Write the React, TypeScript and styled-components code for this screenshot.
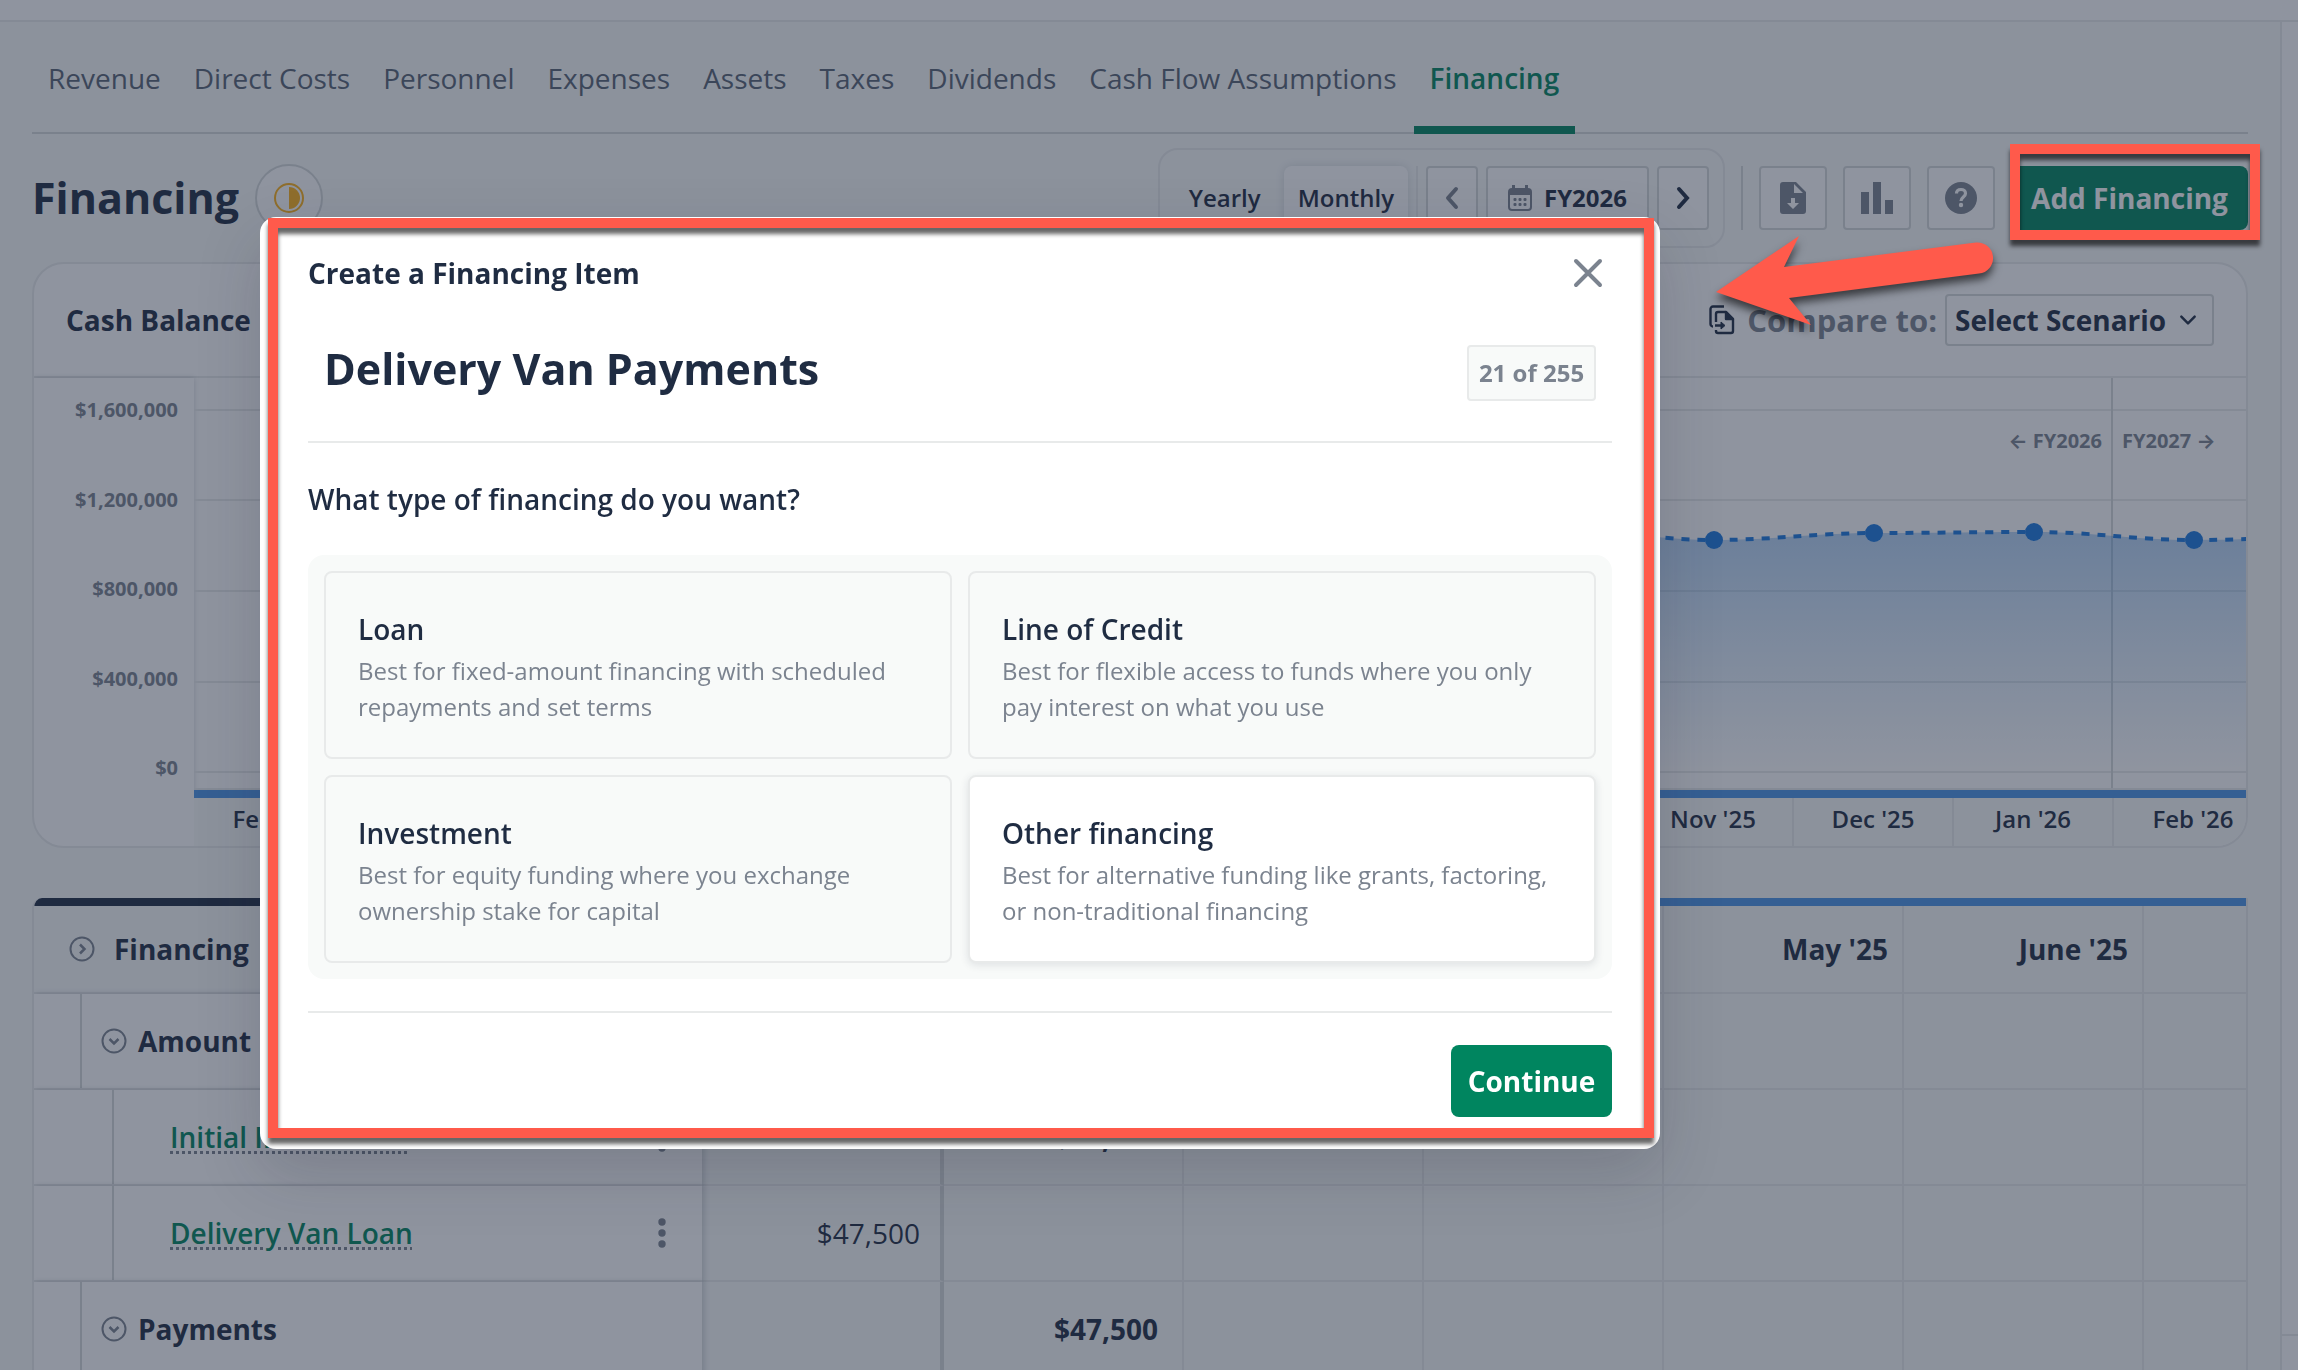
import React from "react";
import styled, { createGlobalStyle, css } from "styled-components";

const color = {
  ink: "#1f2c42",
  slate: "#576373",
  gray: "#7b838f",
  line: "#e8eaea",
  lineDark: "#d5d9d9",
  surface: "#f8faf9",
  green: "#00855f",
  blue: "#4b95e7",
  plot: "#1b79df",
  alert: "#ff5a4b",
};

const GlobalStyle = createGlobalStyle`
  *, *::before, *::after { box-sizing: border-box; }
  body {
    margin: 0;
    background: ${color.surface};
    color: ${color.ink};
    font-family: "Open Sans", "Noto Sans", sans-serif;
    font-size: 28px;
    line-height: 40px;
  }
  button, input, select { font: inherit; color: inherit; margin: 0; }
  h1, h2, p, ul { margin: 0; padding: 0; }
`;

/* ---------- page shell ---------- */

const Shell = styled.div`
  display: flex;
  flex-direction: column;
  height: 100vh;
  overflow: hidden;
`;

const TopBar = styled.div`
  flex: none;
  height: 22px;
  background: #fff;
  border-bottom: 2px solid ${color.line};
`;

const Body = styled.div`
  display: flex;
  flex: 1;
  min-height: 0;
`;

const Main = styled.main`
  flex: 1;
  min-width: 0;
  padding: 0 32px;
`;

const SidePanel = styled.aside`
  flex: none;
  display: flex;
  flex-direction: column;
  justify-content: flex-end;
  width: 18px;
  background: #fff;
  border-left: 2px solid ${color.line};
`;

const SideFooter = styled.div`
  height: 36px;
  border-top: 2px solid ${color.line};
`;

const Tabs = styled.nav`
  display: flex;
  gap: 1px;
  height: 112px;
  border-bottom: 2px solid ${color.lineDark};
`;

const Tab = styled.a<{ $active?: boolean }>`
  display: flex;
  align-items: center;
  height: 112px;
  padding: 0 16px;
  color: ${color.slate};
  text-decoration: none;
  white-space: nowrap;
  ${(p) =>
    p.$active &&
    css`
      color: ${color.green};
      font-weight: 600;
      box-shadow: inset 0 -8px ${color.green};
    `}
`;

/* ---------- toolbar ---------- */

const Toolbar = styled.div`
  display: flex;
  align-items: center;
  gap: 16px;
  padding: 14px 0;
`;

const PageTitle = styled.h1`
  font-size: 43px;
  line-height: 56px;
  font-weight: 700;
`;

const StatusBadge = styled.div`
  display: grid;
  place-items: center;
  width: 68px;
  height: 68px;
  background: #fff;
  border: 2px solid ${color.lineDark};
  border-radius: 50%;
`;

const Spacer = styled.div`
  flex: 1;
`;

const PeriodGroup = styled.div`
  display: flex;
  gap: 8px;
  height: 100px;
  padding: 16px 14px;
  border: 2px solid ${color.line};
  border-radius: 20px;
  font-size: 24px;
  font-weight: 600;
`;

const PeriodButton = styled.button<{ $selected?: boolean }>`
  min-width: 102px;
  padding: 0 14px;
  border: 0;
  border-radius: 8px;
  background: ${(p) => (p.$selected ? "#fff" : "transparent")};
  box-shadow: ${(p) => (p.$selected ? "0 0 8px rgba(31, 44, 66, 0.14)" : "none")};
`;

const Rule = styled.span<{ $dark?: boolean }>`
  width: 2px;
  height: 64px;
  background: ${(p) => (p.$dark ? color.lineDark : color.line)};
`;

const BoxButton = styled.button<{ $width: number }>`
  display: flex;
  align-items: center;
  justify-content: center;
  gap: 12px;
  width: ${(p) => p.$width}px;
  height: 64px;
  padding: 0;
  background: #fff;
  border: 2px solid ${color.lineDark};
  border-radius: 4px;
  color: ${color.gray};
  font-weight: 600;
`;

const Strong = styled.span`
  color: ${color.ink};
  font-weight: 700;
`;

const PrimaryButton = styled.button<{ $width: number; $height: number }>`
  width: ${(p) => p.$width}px;
  height: ${(p) => p.$height}px;
  padding: 0;
  border: 0;
  border-radius: 8px;
  background: ${color.green};
  color: #fff;
  font-weight: 700;
`;

/* ---------- chart card ---------- */

const Card = styled.section`
  border: 2px solid ${color.line};
  border-radius: 32px;
  background: #fff;
  overflow: hidden;
`;

const CardHeader = styled.header`
  display: flex;
  align-items: center;
  height: 114px;
  padding: 0 32px;
  border-bottom: 2px solid ${color.line};
`;

const CardTitle = styled.h2`
  font-size: 28px;
  line-height: 40px;
  font-weight: 700;
`;

const CompareLabel = styled.label`
  display: flex;
  align-items: center;
  gap: 12px;
  margin: 0 8px 0 auto;
  font-weight: 700;
  font-size: 31px;
  color: ${color.gray};
`;

const SelectWrap = styled.div`
  display: grid;
  align-items: center;
  width: 269px;
  height: 52px;
  border: 2px solid ${color.lineDark};
  border-radius: 4px;

  & > * {
    grid-area: 1 / 1;
  }
  & > svg {
    justify-self: end;
    margin-right: 14px;
    pointer-events: none;
  }
`;

const ScenarioSelect = styled.select`
  appearance: none;
  width: 100%;
  height: 48px;
  padding: 0 0 0 8px;
  border: 0;
  background: transparent;
  font-weight: 700;
`;

const ChartBody = styled.div`
  display: flex;
  height: 468px;
`;

const AxisColumn = styled.div`
  flex: none;
  display: flex;
  flex-direction: column;
  justify-content: space-between;
  width: 160px;
  padding: 16px 16px 62px 0;
  font-size: 20px;
  line-height: 32px;
  font-weight: 700;
  text-align: right;
  color: ${color.gray};
  box-shadow: 0 0 6px rgba(31, 44, 66, 0.2);
`;

const Plot = styled.div`
  flex: 1;
  min-width: 0;
  overflow: hidden;

  & > svg {
    display: block;
  }
`;

const MonthAxis = styled.div`
  display: grid;
  grid-template-columns: repeat(13, 160px);
  border-top: 8px solid ${color.blue};
  background: ${color.surface};
`;

const MonthCell = styled.div`
  height: 48px;
  border-right: 2px solid ${color.line};
  font-size: 24px;
  line-height: 42px;
  font-weight: 600;
  text-align: center;
`;

/* ---------- forecast table ---------- */

const TableFrame = styled.section`
  margin-top: 50px;
  border: solid ${color.line};
  border-width: 0 2px;
  border-radius: 10px 0 0 0;
  overflow: hidden;
`;

const TableBar = styled.div`
  height: 8px;
  background: linear-gradient(to right, ${color.ink} 668px, ${color.blue} 668px);
`;

const Table = styled.table`
  table-layout: fixed;
  width: 2350px;
  border-collapse: separate;
  border-spacing: 0;
`;

const HeadCell = styled.th<{ $frozen?: boolean; $wide?: boolean }>`
  height: 88px;
  padding: ${(p) => (p.$frozen ? 0 : "0 14px 0 0")};
  border-bottom: 2px solid ${color.line};
  border-right: ${(p) => (p.$frozen ? 0 : p.$wide ? 4 : 2)}px solid ${(p) => (p.$wide ? color.lineDark : color.line)};
  background: ${color.surface};
  font-weight: 700;
  text-align: right;
`;

const NameCell = styled.th`
  position: relative;
  height: 96px;
  padding: 0;
  border-bottom: 2px solid ${color.line};
  background: #fff;
  box-shadow: 2px 0 6px rgba(31, 44, 66, 0.2);
  text-align: left;
`;

const ValueCell = styled.td<{ $wide?: boolean; $bold?: boolean }>`
  padding: 0 ${(p) => (p.$wide ? 20 : 24)}px 0 0;
  border-bottom: 2px solid ${color.line};
  border-right: ${(p) => (p.$wide ? 4 : 2)}px solid ${(p) => (p.$wide ? color.lineDark : color.line)};
  font-weight: ${(p) => (p.$bold ? 700 : 400)};
  text-align: right;
`;

const RowHead = styled.div`
  display: flex;
  align-items: center;
  height: 94px;
  padding-right: 36px;
  font-weight: 700;
`;

const HeadLabel = styled(RowHead)`
  height: 86px;
  padding-left: 35px;
`;

const Guide = styled.span<{ $depth: number }>`
  align-self: stretch;
  width: ${(p) => p.$depth * 32 + 16}px;
  border-right: 2px solid ${color.lineDark};
`;

const IconButton = styled.button`
  display: flex;
  padding: 0;
  border: 0;
  background: transparent;
  color: ${color.gray};
`;

const ToggleButton = styled(IconButton)`
  margin: 0 11px 0 19px;
`;

const HeadToggle = styled(IconButton)`
  margin-right: 19px;
`;

const ItemLink = styled.a`
  margin-left: 56px;
  color: ${color.green};
  font-weight: 600;
  text-decoration: underline dotted ${color.gray} 3px;
  text-underline-offset: 3px;
`;

/* ---------- dialog ---------- */

const Overlay = styled.div`
  position: fixed;
  inset: 0;
  padding: 217px 0 0 260px;
  background: rgba(31, 41, 63, 0.5);
`;

const Dialog = styled.div`
  position: relative;
  width: 1400px;
  max-width: calc(100% - 32px);
  padding: 32px 48px;
  border-radius: 16px;
  background: #fff;
  box-shadow: 0 24px 64px rgba(31, 35, 50, 0.18);
`;

const DialogHeader = styled.header`
  display: flex;
  align-items: center;
  justify-content: space-between;
  height: 48px;
  padding-right: 8px;
`;

const NameRow = styled.div`
  display: flex;
  align-items: flex-start;
  gap: 16px;
  height: 146px;
  padding: 40px 16px 0;
  border-bottom: 2px solid ${color.line};
`;

const NameInput = styled.input`
  flex: 1;
  min-width: 0;
  height: 64px;
  padding: 0;
  border: 0;
  background: transparent;
  font-size: 43px;
  line-height: 64px;
  font-weight: 700;
`;

const Counter = styled.output`
  width: 129px;
  height: 56px;
  margin-top: 8px;
  border: 2px solid ${color.line};
  border-radius: 4px;
  background: ${color.surface};
  color: ${color.gray};
  font-size: 24px;
  line-height: 52px;
  font-weight: 700;
  text-align: center;
  white-space: nowrap;
`;

const Question = styled.p`
  padding: 36px 0;
  font-weight: 600;
`;

const Options = styled.div`
  display: grid;
  grid-template-columns: 1fr 1fr;
  gap: 16px;
  padding: 16px;
  border-radius: 16px;
  background: ${color.surface};
`;

const Option = styled.button<{ $raised?: boolean }>`
  display: flex;
  flex-direction: column;
  gap: 4px;
  height: 188px;
  padding: 36px 32px 0;
  border: 2px solid ${color.line};
  border-radius: 8px;
  background: ${(p) => (p.$raised ? "#fff" : "transparent")};
  box-shadow: ${(p) => (p.$raised ? "0 2px 8px rgba(31, 44, 66, 0.12)" : "none")};
  text-align: left;
`;

const OptionTitle = styled.span`
  font-weight: 600;
`;

const OptionText = styled.span`
  color: ${color.gray};
  font-size: 24px;
  line-height: 36px;
`;

const DialogFooter = styled.footer`
  display: flex;
  justify-content: flex-end;
  margin-top: 32px;
  padding-top: 32px;
  border-top: 2px solid ${color.line};
`;

/* ---------- callouts ---------- */

const Callout = styled.div`
  position: absolute;
  border: 10px solid ${color.alert};
  filter: drop-shadow(0 6px 2px rgba(0, 0, 0, 0.6));
  pointer-events: none;
`;

const DialogCallout = styled(Callout)`
  inset: 1px 6px 11px 8px;
`;

const ButtonCallout = styled(Callout)`
  position: fixed;
  top: 144px;
  right: 38px;
  width: 250px;
  height: 96px;
`;

const Arrow = styled.svg`
  position: fixed;
  top: 226px;
  right: 296px;
  filter: drop-shadow(0 6px 4px rgba(0, 0, 0, 0.6));
  pointer-events: none;
`;

/* ---------- icons ---------- */

const Chevron = ({ d, size = 24, width = 4 }: { d: string; size?: number; width?: number }) => (
  <svg width={size} height={size} viewBox="0 0 24 24" fill="none" stroke="currentColor" strokeWidth={width} strokeLinecap="round" strokeLinejoin="round">
    <path d={d} />
  </svg>
);

const CircleChevron = ({ down }: { down?: boolean }) => (
  <svg width="26" height="26" viewBox="0 0 26 26" fill="none" stroke="currentColor" strokeWidth="2">
    <circle cx="13" cy="13" r="11.5" />
    <path d={down ? "M8.5 11 13 15.500l4.500-4.500" : "M11 8.500 15.500 13 11 17.500"} strokeWidth="2.500" />
  </svg>
);

const CalendarIcon = () => (
  <svg width="24" height="26" viewBox="0 0 24 26" fill="currentColor">
    <path fillRule="evenodd" d="M4 0h3v3h10V0h3v3a4 4 0 0 1 4 4v15a4 4 0 0 1-4 4H4a4 4 0 0 1-4-4V7a4 4 0 0 1 4-4ZM2 10v12a2 2 0 0 0 2 2h16a2 2 0 0 0 2-2V10Z" />
    {[6, 11, 16].map((x) => (
      <React.Fragment key={x}>
        <rect x={x - 0.5} y="13" width="3" height="3" rx="1" />
        <rect x={x - 0.5} y="18" width="3" height="3" rx="1" />
      </React.Fragment>
    ))}
  </svg>
);

const DownloadIcon = () => (
  <svg width="26" height="32" viewBox="0 0 26 32" fill="currentColor">
    <path fillRule="evenodd" d="M3 0h13l10 10v19a3 3 0 0 1-3 3H3a3 3 0 0 1-3-3V3a3 3 0 0 1 3-3Zm11 2v9h9Zm-3 14v5H7l6 6 6-6h-4v-5Z" />
  </svg>
);

const BarsIcon = () => (
  <svg width="32" height="32" viewBox="0 0 32 32" fill="currentColor">
    <path d="M0 10h8v22H0ZM12 0h8v32h-8ZM24 18h8v14h-8Z" />
  </svg>
);

const HelpIcon = () => (
  <svg width="32" height="32" viewBox="0 0 32 32">
    <circle cx="16" cy="16" r="16" fill="currentColor" />
    <path d="M11.500 11.500c0-3 2-4 4.500-4s4.500 1.500 4.500 4c0 3.500-4.500 3.500-4.500 7.500" fill="none" stroke="#fff" strokeWidth="3.200" />
    <circle cx="16" cy="23" r="2.200" fill="#fff" />
  </svg>
);

const CompareIcon = () => (
  <svg width="26" height="30" viewBox="0 0 26 30" fill="none" stroke={color.ink} strokeWidth="2.400" strokeLinejoin="round">
    <path d="M15 1.500H4A2.500 2.500 0 0 0 1.500 4v15A2.500 2.500 0 0 0 4 21.500" />
    <path d="M7 17V9a2 2 0 0 1 2-2h8l7 7v12a2 2 0 0 1-2 2H9a2 2 0 0 1-2-2v-1" />
    <path d="M17 7v7h7Z" fill={color.ink} />
    <path d="M6 20.500h7" />
    <path d="m12 17 4 3.500-4 3.500Z" fill={color.ink} strokeWidth="1" />
  </svg>
);

const KebabIcon = () => (
  <svg width="8" height="32" viewBox="0 0 8 32" fill="currentColor">
    <circle cx="4" cy="5" r="3.700" />
    <circle cx="4" cy="16" r="3.700" />
    <circle cx="4" cy="27" r="3.700" />
  </svg>
);

const HalfCircleIcon = () => (
  <svg width="32" height="32" viewBox="0 0 32 32">
    <circle cx="16" cy="16" r="14" fill="none" stroke="#ffb31a" strokeWidth="2" />
    <path d="M16 5a11 11 0 0 1 0 22Z" fill="#ffb31a" />
  </svg>
);

/* ---------- data ---------- */

const tabs = ["Revenue", "Direct Costs", "Personnel", "Expenses", "Assets", "Taxes", "Dividends", "Cash Flow Assumptions", "Financing"];

const axisLabels = ["$1,600,000", "$1,200,000", "$800,000", "$400,000", "$0"];

const months = ["Feb '25", "Mar '25", "Apr '25", "May '25", "June '25", "July '25", "Aug '25", "Sept '25", "Oct '25", "Nov '25", "Dec '25", "Jan '26", "Feb '26"];

const columns = ["Initial", "Feb '25", "Mar '25", "Apr '25", "May '25", "June '25", ""];

const gridLines = [32, 122, 213, 304, 394];

const balances = [
  [1360, 151],
  [1520, 162],
  [1680, 155],
  [1840, 154],
  [2000, 162],
  [2160, 158],
];

const rows = [
  { label: "Amount received", group: true, values: ["", "$47,500"] },
  { label: "Initial Investment", values: ["", "$47,500"] },
  { label: "Delivery Van Loan", values: ["$47,500", ""] },
  { label: "Payments", group: true, values: ["", "$47,500"] },
];

const options = [
  { title: "Loan", text: "Best for fixed-amount financing with scheduled repayments and set terms" },
  { title: "Line of Credit", text: "Best for flexible access to funds where you only pay interest on what you use" },
  { title: "Investment", text: "Best for equity funding where you exchange ownership stake for capital" },
  { title: "Other financing", text: "Best for alternative funding like grants, factoring, or non-traditional financing", raised: true },
];

const curve = balances
  .map(([x, y], i) => {
    if (i === 0) return `M${x} ${y}`;
    const [px, py] = balances[i - 1];
    return `C${px + 60} ${py} ${x - 60} ${y} ${x} ${y}`;
  })
  .join("");

const BalanceChart = () => (
  <svg width="2080" height="412" viewBox="0 0 2080 412" role="img" aria-label="Cash balance by month">
    <defs>
      <linearGradient id="fill" x1="0" y1="150" x2="0" y2="394" gradientUnits="userSpaceOnUse">
        <stop offset="0" stopColor={color.plot} stopOpacity="0.32" />
        <stop offset="0.5" stopColor={color.plot} stopOpacity="0.15" />
        <stop offset="1" stopColor={color.plot} stopOpacity="0" />
      </linearGradient>
    </defs>
    {gridLines.map((y) => (
      <rect key={y} y={y - 1} width="2080" height="2" fill={color.line} />
    ))}
    <rect y="410" width="2080" height="2" fill={color.line} />
    <rect x="1917" width="2" height="410" fill={color.lineDark} />
    <path d={`${curve}V394H1360Z`} fill="url(#fill)" />
    <path d={curve} fill="none" stroke={color.plot} strokeWidth="4" strokeDasharray="8 8" />
    {balances.map(([x, y]) => (
      <circle key={x} cx={x} cy={y} r="9" fill={color.plot} />
    ))}
    <g fill={color.gray} fontSize="20" fontWeight="700">
      <text x="1908" y="70" textAnchor="end">
        <tspan fontFamily="Inter">←</tspan> FY2026
      </text>
      <text x="1928" y="70">
        FY2027 <tspan fontFamily="Inter">→</tspan>
      </text>
    </g>
  </svg>
);

export default function App() {
  return (
    <>
      <GlobalStyle />
      <Shell>
        <TopBar />
        <Body>
          <Main>
            <Tabs>
              {tabs.map((t) => (
                <Tab key={t} href="#" $active={t === "Financing"}>
                  {t}
                </Tab>
              ))}
            </Tabs>

            <Toolbar>
              <PageTitle>Financing</PageTitle>
              <StatusBadge>
                <HalfCircleIcon />
              </StatusBadge>
              <Spacer />
              <PeriodGroup>
                <PeriodButton>Yearly</PeriodButton>
                <PeriodButton $selected>Monthly</PeriodButton>
                <Rule />
                <BoxButton $width={52} aria-label="Previous year">
                  <Chevron d="M16 3 8 12l8 9" />
                </BoxButton>
                <BoxButton $width={163}>
                  <CalendarIcon />
                  <Strong>FY2026</Strong>
                </BoxButton>
                <BoxButton $width={52} aria-label="Next year">
                  <Strong as="svg" width="24" height="24" viewBox="0 0 24 24" fill="none" stroke="currentColor" strokeWidth="4" strokeLinecap="round">
                    <path d="m8 3 8 9-8 9" />
                  </Strong>
                </BoxButton>
              </PeriodGroup>
              <Rule $dark />
              <BoxButton $width={68} aria-label="Download">
                <DownloadIcon />
              </BoxButton>
              <BoxButton $width={68} aria-label="Charts">
                <BarsIcon />
              </BoxButton>
              <BoxButton $width={68} aria-label="Help">
                <HelpIcon />
              </BoxButton>
              <PrimaryButton $width={237} $height={64}>
                Add Financing
              </PrimaryButton>
            </Toolbar>

            <Card>
              <CardHeader>
                <CardTitle>Cash Balance</CardTitle>
                <CompareLabel htmlFor="scenario">
                  <CompareIcon />
                  Compare to:
                </CompareLabel>
                <SelectWrap>
                  <ScenarioSelect id="scenario">
                    <option>Select Scenario</option>
                  </ScenarioSelect>
                  <Chevron d="m4 8 8 8 8-8" size={20} width={3} />
                </SelectWrap>
              </CardHeader>
              <ChartBody>
                <AxisColumn>
                  {axisLabels.map((l) => (
                    <span key={l}>{l}</span>
                  ))}
                </AxisColumn>
                <Plot>
                  <BalanceChart />
                  <MonthAxis>
                    {months.map((m) => (
                      <MonthCell key={m}>{m}</MonthCell>
                    ))}
                  </MonthAxis>
                </Plot>
              </ChartBody>
            </Card>

            <TableFrame>
              <TableBar />
              <Table>
                <colgroup>
                  <col width="668" />
                  <col width="242" />
                  <col span={6} width="240" />
                </colgroup>
                <thead>
                  <tr>
                    <HeadCell $frozen>
                      <HeadLabel>
                        <HeadToggle aria-label="Expand all">
                          <CircleChevron />
                        </HeadToggle>
                        Financing
                      </HeadLabel>
                    </HeadCell>
                    {columns.map((c, i) => (
                      <HeadCell key={i} $wide={i === 0}>
                        {c}
                      </HeadCell>
                    ))}
                  </tr>
                </thead>
                <tbody>
                  {rows.map((r) => (
                    <tr key={r.label}>
                      <NameCell scope="row">
                        <RowHead>
                          <Guide $depth={r.group ? 1 : 2} />
                          {r.group ? (
                            <>
                              <ToggleButton aria-label={`Collapse ${r.label}`}>
                                <CircleChevron down />
                              </ToggleButton>
                              {r.label}
                            </>
                          ) : (
                            <>
                              <ItemLink href="#">{r.label}</ItemLink>
                              <Spacer />
                              <IconButton aria-label={`${r.label} actions`}>
                                <KebabIcon />
                              </IconButton>
                            </>
                          )}
                        </RowHead>
                      </NameCell>
                      {columns.map((c, i) => (
                        <ValueCell key={i} $wide={i === 0} $bold={i > 0}>
                          {r.values[i] ?? ""}
                        </ValueCell>
                      ))}
                    </tr>
                  ))}
                </tbody>
              </Table>
            </TableFrame>
          </Main>
          <SidePanel>
            <SideFooter />
          </SidePanel>
        </Body>
      </Shell>

      <Overlay>
        <Dialog role="dialog" aria-modal="true" aria-labelledby="dialog-title">
          <DialogHeader>
            <CardTitle id="dialog-title">Create a Financing Item</CardTitle>
            <IconButton aria-label="Close">
              <svg width="32" height="32" viewBox="0 0 32 32" fill="none" stroke="currentColor" strokeWidth="4" strokeLinecap="round">
                <path d="M4 4l24 24M28 4 4 28" />
              </svg>
            </IconButton>
          </DialogHeader>
          <NameRow>
            <NameInput aria-label="Financing item name" defaultValue="Delivery Van Payments" maxLength={255} />
            <Counter>21 of 255</Counter>
          </NameRow>
          <Question>What type of financing do you want?</Question>
          <Options>
            {options.map((o) => (
              <Option key={o.title} type="button" $raised={o.raised}>
                <OptionTitle>{o.title}</OptionTitle>
                <OptionText>{o.text}</OptionText>
              </Option>
            ))}
          </Options>
          <DialogFooter>
            <PrimaryButton $width={161} $height={72}>
              Continue
            </PrimaryButton>
          </DialogFooter>
          <DialogCallout />
        </Dialog>
      </Overlay>

      <ButtonCallout />
      <Arrow width="296" height="110" viewBox="0 0 296 110" fill={color.alert}>
        <path d="M10 66 93 10 78 41 270 16.500a15.500 15.500 0 0 1 3 31L83 72 105 99Z" />
      </Arrow>
    </>
  );
}
